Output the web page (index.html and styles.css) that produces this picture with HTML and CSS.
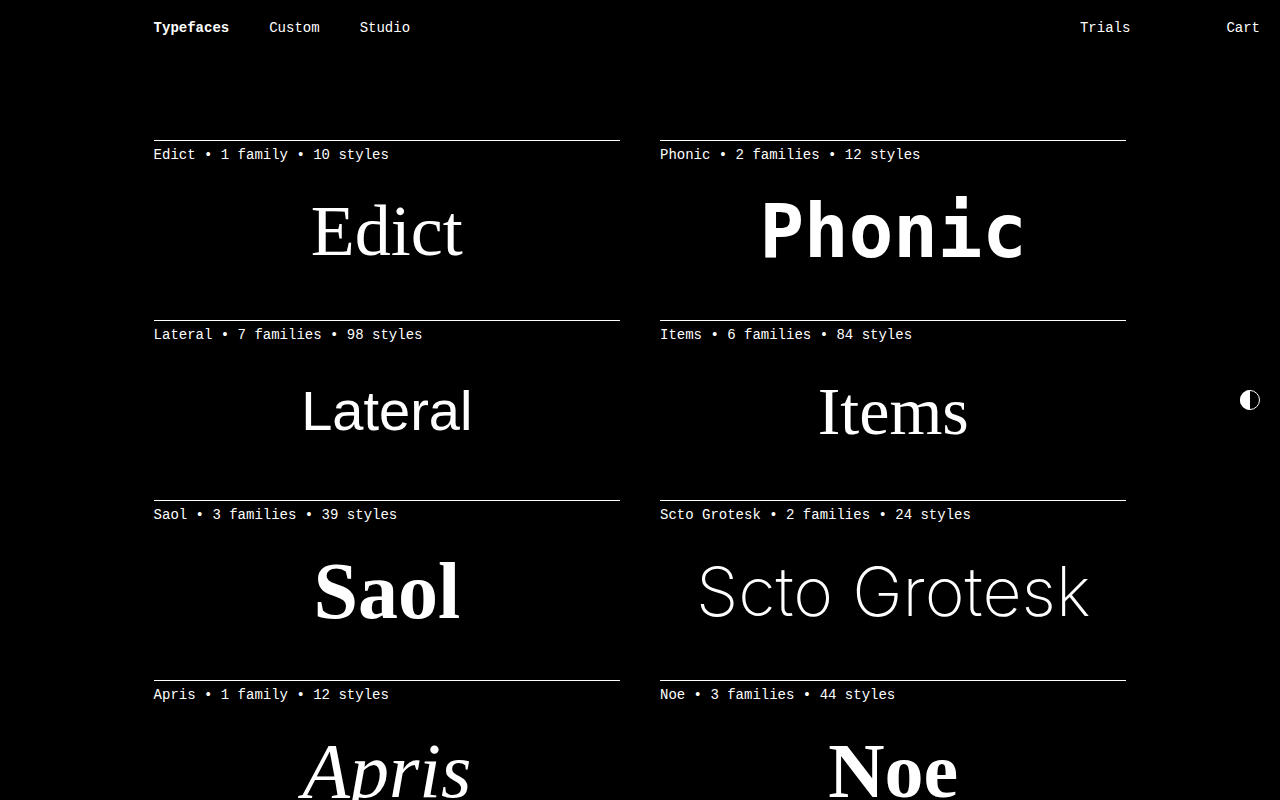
FILE: index.html
```html
<!DOCTYPE html>
<html lang="en">
<head>
    <meta charset="UTF-8">
    <meta name="viewport" content="width=device-width, initial-scale=1.0">
    <title>Typefaces</title>
    <link rel="stylesheet" href="styles.css">
</head>
<body>
    <header class="site-header">
        <nav class="main-nav">
            <a href="#" class="active">Typefaces</a>
            <a href="#">Custom</a>
            <a href="#">Studio</a>
        </nav>
        <nav class="shop-nav">
            <a href="#">Trials</a>
            <a href="#">Cart</a>
        </nav>
    </header>

    <main class="typefaces">
        <a href="#" class="typeface">
            <p class="info">Edict • 1 family • 10 styles</p>
            <h2 class="name edict">Edict</h2>
        </a>
        <a href="#" class="typeface">
            <p class="info">Phonic • 2 families • 12 styles</p>
            <h2 class="name phonic">Phonic</h2>
        </a>
        <a href="#" class="typeface">
            <p class="info">Lateral • 7 families • 98 styles</p>
            <h2 class="name lateral">Lateral</h2>
        </a>
        <a href="#" class="typeface">
            <p class="info">Items • 6 families • 84 styles</p>
            <h2 class="name items">Items</h2>
        </a>
        <a href="#" class="typeface">
            <p class="info">Saol • 3 families • 39 styles</p>
            <h2 class="name saol">Saol</h2>
        </a>
        <a href="#" class="typeface">
            <p class="info">Scto Grotesk • 2 families • 24 styles</p>
            <h2 class="name scto">Scto Grotesk</h2>
        </a>
        <a href="#" class="typeface">
            <p class="info">Apris • 1 family • 12 styles</p>
            <h2 class="name apris">Apris</h2>
        </a>
        <a href="#" class="typeface">
            <p class="info">Noe • 3 families • 44 styles</p>
            <h2 class="name noe">Noe</h2>
        </a>
    </main>

    <button type="button" class="theme-toggle" aria-label="Switch theme">
        <svg viewBox="0 0 20 20" width="20" height="20">
            <circle cx="10" cy="10" r="9.5" fill="none" stroke="currentColor"/>
            <path d="M10 0a10 10 0 0 0 0 20z" fill="currentColor"/>
        </svg>
    </button>
</body>
</html>
```
FILE: styles.css
```css
* {
    box-sizing: border-box;
}

body {
    margin: 0;
    background: #000;
    color: #fff;
    font-family: "Liberation Mono", monospace;
    font-size: 14px;
    line-height: 20px;
}

a {
    color: inherit;
    text-decoration: none;
}

.site-header {
    display: flex;
    justify-content: space-between;
    padding: 18px 20px 18px 12%;
}

.main-nav {
    display: flex;
    gap: 40px;
}

.shop-nav {
    display: flex;
    gap: 96px;
}

.active {
    font-weight: bold;
}

/* Two column list of typefaces */
.typefaces {
    display: grid;
    grid-template-columns: 1fr 1fr;
    column-gap: 40px;
    padding: 84px 12% 40px;
}

.typeface {
    height: 180px;
    border-top: 1px solid #fff;
}

.info {
    margin: 4px 0 0;
}

.name {
    margin: 16px 0 0;
    font-weight: normal;
    line-height: 100px;
    text-align: center;
    white-space: nowrap;
}

/* Each name is set in its own style */
.edict {
    font-family: "Liberation Serif", serif;
    font-size: 72px;
}

.phonic {
    font-family: "DejaVu Sans Mono", monospace;
    font-size: 74px;
    font-weight: bold;
}

.lateral {
    font-family: "Liberation Sans Narrow", "Liberation Sans", sans-serif;
    font-size: 56px;
}

.items {
    font-family: "Liberation Serif", serif;
    font-size: 68px;
}

.saol {
    font-family: "Liberation Serif", serif;
    font-size: 80px;
    font-weight: bold;
}

.scto {
    font-family: Inter, sans-serif;
    font-size: 68px;
    font-weight: 200;
}

.apris {
    font-family: "Liberation Serif", serif;
    font-size: 78px;
    font-style: italic;
}

.noe {
    font-family: "Liberation Serif", serif;
    font-size: 78px;
    font-weight: bold;
}

.theme-toggle {
    position: fixed;
    top: 50%;
    right: 20px;
    margin: -10px 0 0;
    padding: 0;
    border: 0;
    background: none;
    color: #fff;
    cursor: pointer;
}

.theme-toggle svg {
    display: block;
}
```
